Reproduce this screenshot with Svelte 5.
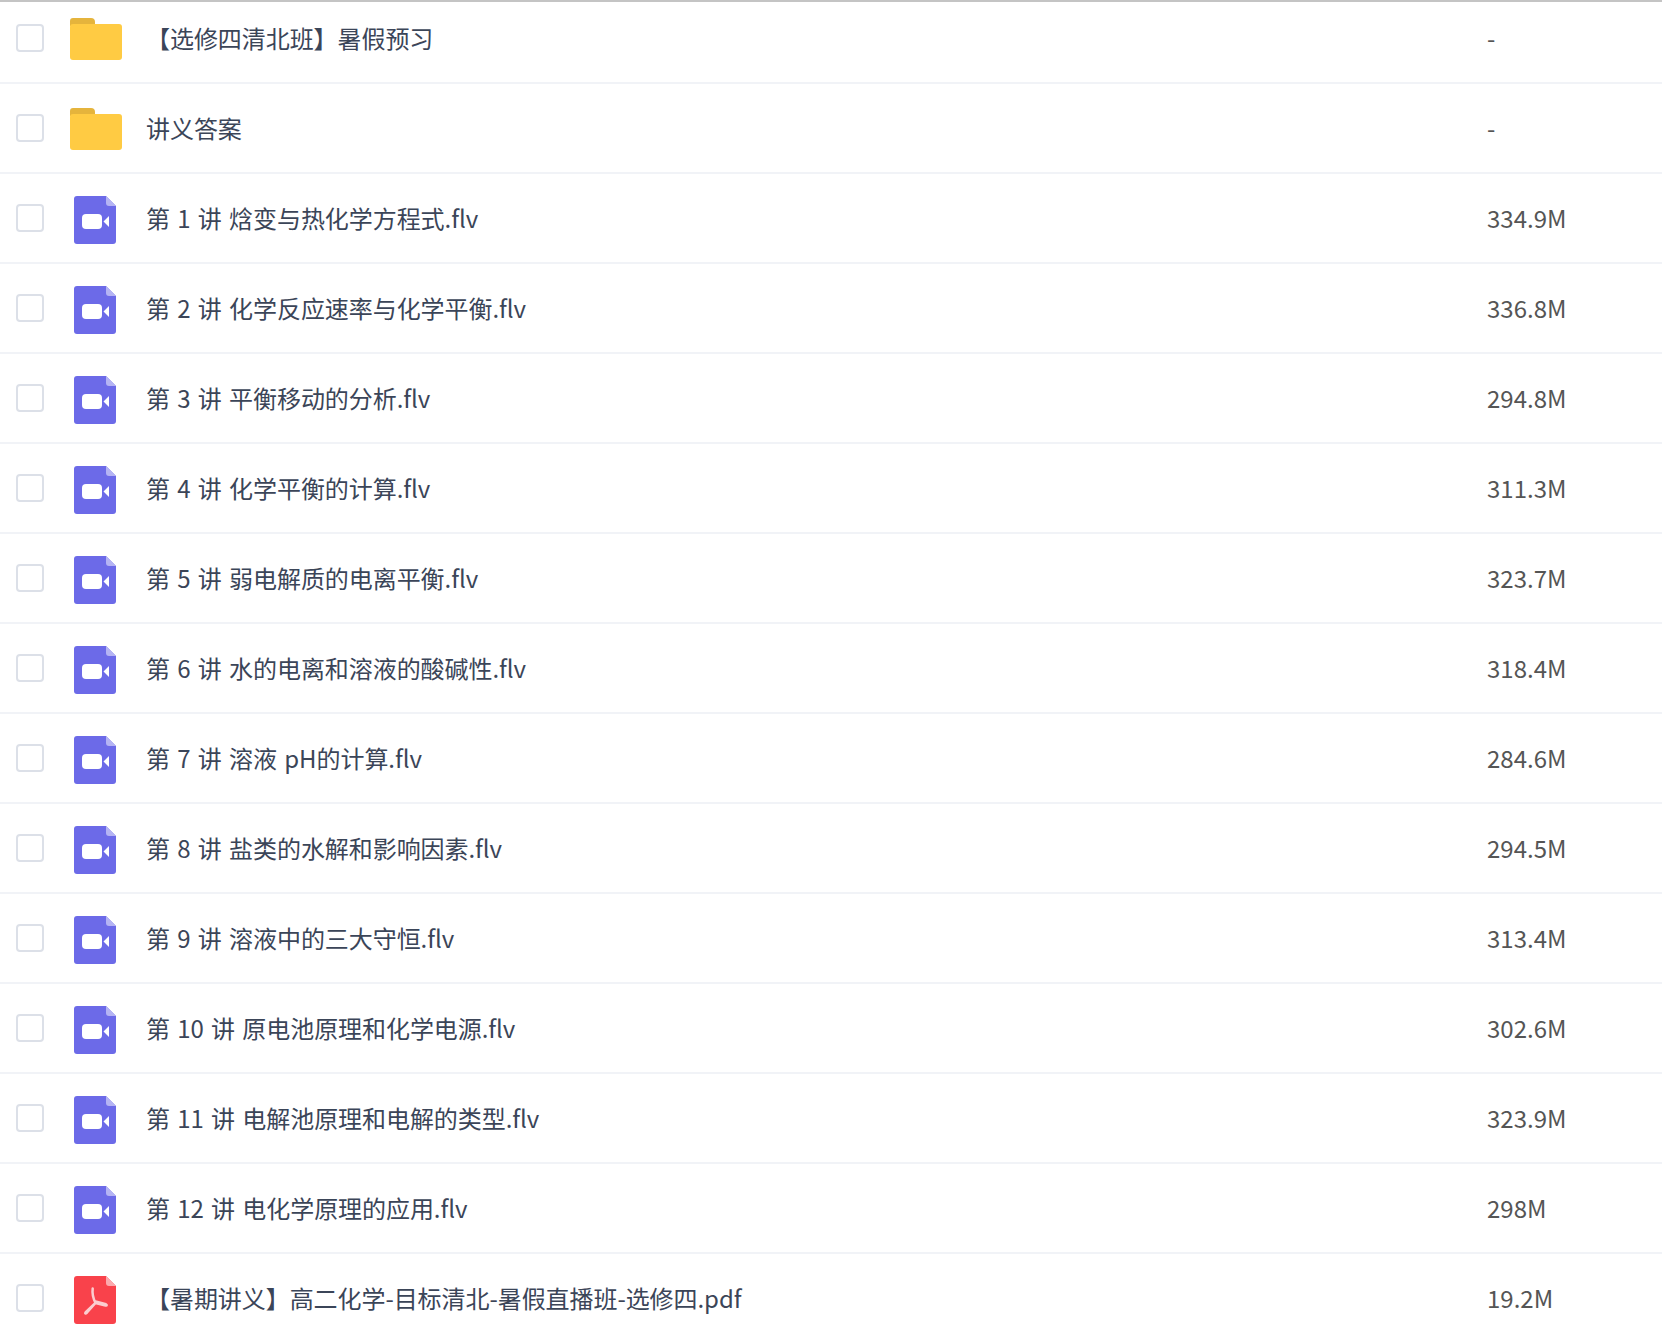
<script lang="ts">
  interface FileRow {
    name: string;
    size: string;
    type: 'folder' | 'video' | 'pdf';
  }

  const rows: FileRow[] = [
    { name: '【选修四清北班】暑假预习', size: '-', type: 'folder' },
    { name: '讲义答案', size: '-', type: 'folder' },
    { name: '第 1 讲 焓变与热化学方程式.flv', size: '334.9M', type: 'video' },
    { name: '第 2 讲 化学反应速率与化学平衡.flv', size: '336.8M', type: 'video' },
    { name: '第 3 讲 平衡移动的分析.flv', size: '294.8M', type: 'video' },
    { name: '第 4 讲 化学平衡的计算.flv', size: '311.3M', type: 'video' },
    { name: '第 5 讲 弱电解质的电离平衡.flv', size: '323.7M', type: 'video' },
    { name: '第 6 讲 水的电离和溶液的酸碱性.flv', size: '318.4M', type: 'video' },
    { name: '第 7 讲 溶液 pH的计算.flv', size: '284.6M', type: 'video' },
    { name: '第 8 讲 盐类的水解和影响因素.flv', size: '294.5M', type: 'video' },
    { name: '第 9 讲 溶液中的三大守恒.flv', size: '313.4M', type: 'video' },
    { name: '第 10 讲 原电池原理和化学电源.flv', size: '302.6M', type: 'video' },
    { name: '第 11 讲 电解池原理和电解的类型.flv', size: '323.9M', type: 'video' },
    { name: '第 12 讲 电化学原理的应用.flv', size: '298M', type: 'video' },
    { name: '【暑期讲义】高二化学-目标清北-暑假直播班-选修四.pdf', size: '19.2M', type: 'pdf' }
  ];
</script>

<div class="file-list">
  {#each rows as row}
    <div class="file-row">
      <span class="checkbox"></span>
      <span class="icon">
        {#if row.type === 'folder'}
          <svg width="52" height="42" viewBox="0 0 52 42">
            <path d="M0 3a3 3 0 0 1 3-3h18a4 4 0 0 1 4 4v4H0z" fill="#e5b43c" />
            <path d="M0 9a3 3 0 0 1 3-3h46a3 3 0 0 1 3 3v30a3 3 0 0 1-3 3H3a3 3 0 0 1-3-3z" fill="#ffcb43" />
          </svg>
        {:else}
          <svg class="file-icon" width="42" height="48" viewBox="0 0 42 48">
            <path
              d="M3 0h29l10 10v35a3 3 0 0 1-3 3H3a3 3 0 0 1-3-3V3a3 3 0 0 1 3-3z"
              fill={row.type === 'video' ? '#6c6ae8' : '#f9424b'}
            />
            <path d="M32 0l10 10h-7a3 3 0 0 1-3-3z" fill={row.type === 'video' ? '#b5b4f4' : '#fcaaae'} />
            {#if row.type === 'video'}
              <rect x="8" y="18" width="20" height="15" rx="4" fill="#fff" />
              <path d="M29.500 25.500l5.500-5.500v11z" fill="#fff" />
            {:else}
              <path
                d="M18.700 12.500c-.7 5 .3 9.500 2.800 14.500l-9.500 9c-1.500 1.500-.5 2 1 .5l8.500-9.500 10 2.500c1.500.3 1.500-.8.500-1.200l-10.500-2.800"
                fill="none"
                stroke="#fbcdcf"
                stroke-width="2.500"
                stroke-linecap="round"
                stroke-linejoin="round"
              />
            {/if}
          </svg>
        {/if}
      </span>
      <span class="name">{row.name}</span>
      <span class="size">{row.size}</span>
    </div>
  {/each}
</div>

<style>
  :global(body) {
    background: #fff;
  }

  .file-list {
    border-top: 2px solid #c4c4c4;
    font-family: 'Noto Sans CJK SC', 'Noto Sans', sans-serif;
  }

  .file-row {
    display: grid;
    grid-template-columns: 28px 52px 1fr 175px;
    align-items: center;
    box-sizing: border-box;
    height: 90px;
    padding-left: 16px;
    border-bottom: 2px solid #f1f3f7;
  }

  .file-row:first-child {
    height: 82px;
    padding-bottom: 8px;
  }

  .file-row:last-child {
    border-bottom-color: transparent;
  }

  .checkbox {
    box-sizing: border-box;
    width: 28px;
    height: 28px;
    border: 2px solid #dce0e8;
    border-radius: 4px;
    background: #fff;
  }

  .icon {
    display: flex;
    justify-content: center;
    margin-left: 26px;
    width: 52px;
    padding-top: 2px;
  }

  .file-icon {
    margin-right: 2px;
    margin-top: 2px;
  }

  .name {
    margin-left: 50px;
    padding-bottom: 2px;
    font-size: 24px;
    letter-spacing: -0.06px;
    word-spacing: 2px;
    color: #3b4558;
    white-space: nowrap;
  }

  .size {
    padding-bottom: 2px;
    font-size: 24px;
    color: #555;
  }
</style>
